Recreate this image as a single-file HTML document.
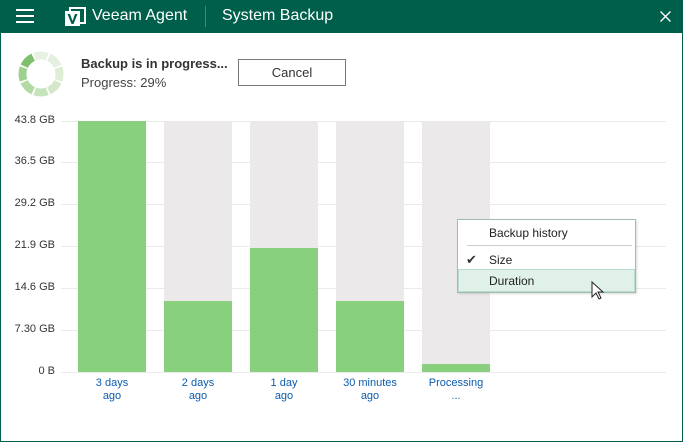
<!DOCTYPE html>
<html><head><style>
*{margin:0;padding:0;box-sizing:border-box}
body{width:683px;height:442px;overflow:hidden;background:#fff;font-family:"Liberation Sans",sans-serif;position:relative}
.win{position:absolute;left:0;top:0;width:683px;height:442px;border:1px solid #005f4b;border-top:none}
.hdr{position:absolute;left:0;top:0;width:683px;height:33px;background:#005f4b;color:#fff}
.t{position:absolute;white-space:nowrap}
.yl{position:absolute;right:628px;font-size:11px;color:#333;text-align:right;width:60px}
.grid{position:absolute;left:61px;width:605px;height:1px;background:#eaeaea}
.bg{position:absolute;top:121px;height:251px;width:68px;background:#ebe9ea}
.bar{position:absolute;width:68px;background:#88cf7e}
.xl{position:absolute;top:377px;width:90px;text-align:center;font-size:11px;line-height:13px;color:#0b5cad}
</style></head><body>
<div class="win"></div>
<div class="hdr">
 <div style="position:absolute;left:16px;top:9px;width:18px;height:2px;background:#fff"></div>
 <div style="position:absolute;left:16px;top:15px;width:18px;height:2px;background:#fff"></div>
 <div style="position:absolute;left:16px;top:21px;width:18px;height:2px;background:#fff"></div>
 <svg style="position:absolute;left:64px;top:6px" width="22" height="22" viewBox="0 0 22 22"><rect x="1" y="5" width="15" height="15" fill="#fff"/><path d="M6 5v-3h15v15h-5" stroke="#fff" stroke-width="2" fill="none"/><path d="M3.5 8l4 10h2l4-10h-2.5l-2.5 7-2.5-7z" fill="#005f4b"/></svg>
 <div class="t" style="left:92px;top:7px;font-size:16px">Veeam Agent</div>
 <div style="position:absolute;left:205px;top:6px;width:1px;height:21px;background:#3f8876"></div>
 <div class="t" style="left:222px;top:7px;font-size:16px">System Backup</div>
 <svg style="position:absolute;left:660px;top:11px" width="11" height="11" viewBox="0 0 11 11"><path d="M0.5 0.5l10 10M10.5 0.5l-10 10" stroke="#fff" stroke-width="1.3"/></svg>
</div>
<svg style="position:absolute;left:15px;top:48px" width="52" height="52" viewBox="-26 -26 52 52" fill="none" stroke-width="8">
 <path d="M-6.3-17.4A18.5 18.5 0 0 1 6.3-17.4" stroke="#e8f2e3" transform="rotate(0)"/>
 <path d="M-6.3-17.4A18.5 18.5 0 0 1 6.3-17.4" stroke="#e4f0df" transform="rotate(45)"/>
 <path d="M-6.3-17.4A18.5 18.5 0 0 1 6.3-17.4" stroke="#ddedd6" transform="rotate(90)"/>
 <path d="M-6.3-17.4A18.5 18.5 0 0 1 6.3-17.4" stroke="#d3e8ca" transform="rotate(135)"/>
 <path d="M-6.3-17.4A18.5 18.5 0 0 1 6.3-17.4" stroke="#c7e3bc" transform="rotate(180)"/>
 <path d="M-6.3-17.4A18.5 18.5 0 0 1 6.3-17.4" stroke="#b3d9a5" transform="rotate(225)"/>
 <path d="M-6.3-17.4A18.5 18.5 0 0 1 6.3-17.4" stroke="#9fd08f" transform="rotate(270)"/>
 <path d="M-6.3-17.4A18.5 18.5 0 0 1 6.3-17.4" stroke="#7fc06c" transform="rotate(315)"/>
</svg>
<div class="t" style="left:81px;top:56px;font-size:13px;font-weight:bold;color:#333">Backup is in progress...</div>
<div class="t" style="left:81px;top:75px;font-size:13px;color:#444">Progress: 29%</div>
<div style="position:absolute;left:238px;top:59px;width:108px;height:27px;border:1px solid #777;font-size:13px;color:#333;text-align:center;line-height:25px">Cancel</div>

<div class="grid" style="top:121px"></div><div class="grid" style="top:162px"></div><div class="grid" style="top:204px"></div><div class="grid" style="top:246px"></div><div class="grid" style="top:288px"></div><div class="grid" style="top:330px"></div><div class="grid" style="top:372px"></div>
<div class="yl" style="top:114px">43.8 GB</div>
<div class="yl" style="top:155px">36.5 GB</div>
<div class="yl" style="top:197px">29.2 GB</div>
<div class="yl" style="top:239px">21.9 GB</div>
<div class="yl" style="top:281px">14.6 GB</div>
<div class="yl" style="top:323px">7.30 GB</div>
<div class="yl" style="top:365px">0 B</div>

<div class="bg" style="left:78px"></div><div class="bg" style="left:164px"></div><div class="bg" style="left:250px"></div><div class="bg" style="left:336px"></div><div class="bg" style="left:422px"></div>
<div class="bar" style="left:78px;top:121px;height:251px"></div>
<div class="bar" style="left:164px;top:301px;height:71px"></div>
<div class="bar" style="left:250px;top:248px;height:124px"></div>
<div class="bar" style="left:336px;top:301px;height:71px"></div>
<div class="bar" style="left:422px;top:364px;height:8px"></div>

<div class="xl" style="left:67px">3 days<br>ago</div>
<div class="xl" style="left:153px">2 days<br>ago</div>
<div class="xl" style="left:239px">1 day<br>ago</div>
<div class="xl" style="left:325px">30 minutes<br>ago</div>
<div class="xl" style="left:411px">Processing<br>...</div>

<div style="position:absolute;left:457px;top:219px;width:179px;height:74px;background:#fff;border:1px solid #9fbdb2;box-shadow:1px 1px 2px rgba(0,0,0,.15)">
 <div class="t" style="left:31px;top:6px;font-size:12px;color:#222">Backup history</div>
 <div style="position:absolute;left:9px;top:25px;width:165px;height:1px;background:#ccc"></div>
 <div class="t" style="left:8px;top:32px;font-size:13px;color:#333">✔</div>
 <div class="t" style="left:31px;top:33px;font-size:12px;color:#222">Size</div>
 <div style="position:absolute;left:0;top:49px;width:177px;height:23px;background:#dff1e8;border:1px solid #b9ddca"></div>
 <div class="t" style="left:31px;top:54px;font-size:12px;color:#222">Duration</div>
</div>
<svg style="position:absolute;left:591px;top:281px" width="14" height="20" viewBox="0 0 14 20"><path d="M1 1v15l4-4 3 6 2-1-3-6h5z" fill="#fff" stroke="#222" stroke-width="1"/></svg>
</body></html>
